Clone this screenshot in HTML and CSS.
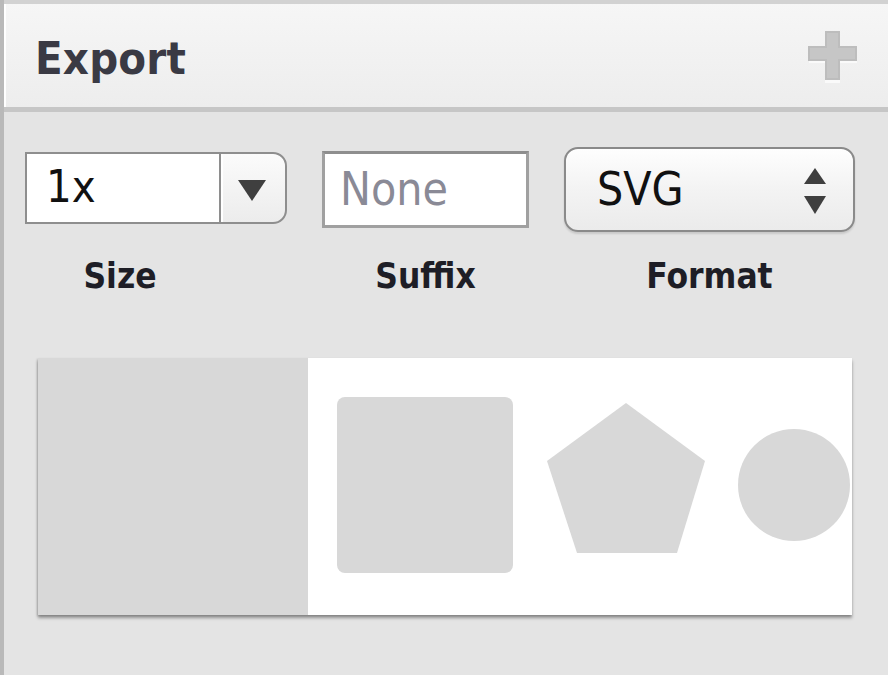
FILE: index.html
```html
<!DOCTYPE html>
<html>
<head>
<meta charset="utf-8">
<link rel="stylesheet" href="styles.css">
</head>
<body>
<div class="panel">
  <header class="header">
    <h1 class="title">Export</h1>
    <svg class="plus" width="50" height="52" viewBox="0 0 50 52">
      <rect x="17" y="2" width="15" height="50" fill="#fafafa"/>
      <rect x="1" y="17" width="48" height="15" fill="#fafafa"/>
      <rect x="17" y="0" width="15" height="49" fill="#bdbdbd"/>
      <rect x="0" y="15" width="49" height="15" fill="#bdbdbd"/>
      <rect x="19" y="2" width="11" height="45" fill="#c6c6c6"/>
      <rect x="2" y="17" width="45" height="11" fill="#c6c6c6"/>
    </svg>
  </header>
  <section class="body">
    <div class="controls">
      <div class="field field-size">
        <div class="control">
          <div class="combo">
            <div class="combo-text">1x</div>
            <div class="combo-btn">
              <svg width="30" height="24" viewBox="0 0 30 24"><path d="M1 2 L29 2 L15 23 Z" fill="#3f3f3f"/></svg>
            </div>
          </div>
        </div>
        <div class="label label-size">Size</div>
      </div>
      <div class="field field-suffix">
        <div class="control">
          <div class="input">None</div>
        </div>
        <div class="label">Suffix</div>
      </div>
      <div class="field field-format">
        <div class="control">
          <div class="select">
            <span class="select-text">SVG</span>
            <svg class="stepper" width="24" height="46" viewBox="0 0 24 46"><path d="M12 0 L23 16 L1 16 Z" fill="#3f3f3f"/><path d="M1 28 L23 28 L12 46 Z" fill="#3f3f3f"/></svg>
          </div>
        </div>
        <div class="label">Format</div>
      </div>
    </div>
    <div class="preview">
      <div class="preview-bg"></div>
      <svg class="preview-art" width="544" height="257" viewBox="0 0 544 257">
        <rect x="29" y="39" width="176" height="176" rx="8" fill="#d8d8d8"/>
        <polygon points="318,45 397,103 369,195 269,195 239,103" fill="#d8d8d8"/>
        <circle cx="486" cy="127" r="56" fill="#d8d8d8"/>
      </svg>
    </div>
  </section>
</div>
</body>
</html>
```

FILE: styles.css
```css
html, body {
  margin: 0;
  padding: 0;
  background: #e4e4e4;
}

body {
  width: 888px;
  height: 675px;
  overflow: hidden;
  font-family: "DejaVu Sans Condensed", "DejaVu Sans", sans-serif;
}

.panel {
  height: 675px;
  border-left: 4px solid #b9b9b9;
  box-sizing: border-box;
  background: #e4e4e4;
}

.header {
  height: 112px;
  box-sizing: border-box;
  border-top: 4px solid #d2d2d2;
  border-bottom: 5px solid #c6c6c6;
  background: linear-gradient(#f6f6f6, #ededed);
  box-shadow: inset 2px 0 0 #ffffff;
  display: flex;
  align-items: center;
  justify-content: space-between;
  padding: 0 30px 0 31px;
}

.title {
  margin: 0;
  font-size: 45px;
  font-weight: bold;
  color: #3a3a44;
  letter-spacing: 0.2px;
  position: relative;
  top: 3px;
}

.plus {
  display: block;
  position: relative;
  top: 1px;
}

.body {
  padding: 35px 33px 0 21px;
}

.controls {
  display: flex;
  gap: 35px;
  align-items: flex-start;
}

.field {
  display: flex;
  flex-direction: column;
  align-items: center;
}

.control {
  height: 85px;
  align-self: stretch;
  display: flex;
  align-items: center;
}

.label {
  margin-top: 24px;
  font-weight: bold;
  font-size: 35px;
  color: #1e1e26;
  line-height: 40px;
}

.label-size {
  align-self: stretch;
  text-align: center;
  padding-right: 72px;
}

/* Size combo */
.field-size {
  width: 262px;
}

.combo {
  width: 262px;
  height: 72px;
  box-sizing: border-box;
  display: flex;
  position: relative;
  top: -2px;
}

.combo-text {
  width: 194px;
  box-sizing: border-box;
  background: #ffffff;
  border: 2px solid #8e8e8e;
  border-right: none;
  font-size: 45px;
  color: #111;
  line-height: 66px;
  padding-left: 19px;
}

.combo-btn {
  flex: 1;
  border: 2px solid #8e8e8e;
  border-radius: 0 14px 14px 0;
  background: linear-gradient(#fbfbfb, #ececec);
  display: flex;
  align-items: center;
  justify-content: center;
  box-shadow: inset 2px 0 0 #ffffff;
}

.combo-btn svg {
  display: block;
  margin-top: 4px;
  margin-left: -2px;
}

/* Suffix input */
.field-suffix {
  width: 207px;
}

.input {
  width: 207px;
  height: 77px;
  box-sizing: border-box;
  background: #ffffff;
  border: 3px solid #a0a0a0;
  border-top-color: #8e8e8e;
  font-size: 46px;
  color: #8a8a96;
  line-height: 70px;
  padding-left: 15px;
}

/* Format select */
.field-format {
  width: 291px;
}

.select {
  width: 291px;
  height: 85px;
  box-sizing: border-box;
  border: 2px solid #8a8a8a;
  border-radius: 14px;
  background: linear-gradient(#fefefe, #f3f3f3 50%, #ebebeb);
  box-shadow: 0 2px 2px rgba(0, 0, 0, 0.12);
  display: flex;
  align-items: center;
  justify-content: space-between;
  padding: 0 26px 0 31px;
}

.select-text {
  font-size: 46px;
  color: #111;
  position: relative;
  top: -1px;
}

.stepper {
  display: block;
  position: relative;
  top: 1px;
}

/* Preview */
.preview {
  margin-top: 62px;
  margin-left: 13px;
  width: 814px;
  height: 257px;
  display: flex;
  background: #ffffff;
  box-shadow: 0 3px 3px rgba(0, 0, 0, 0.35), -1px 1px 2px rgba(0, 0, 0, 0.15);
  overflow: hidden;
}

.preview-bg {
  width: 270px;
  background: #d8d8d8;
}

.preview-art {
  display: block;
}
```
